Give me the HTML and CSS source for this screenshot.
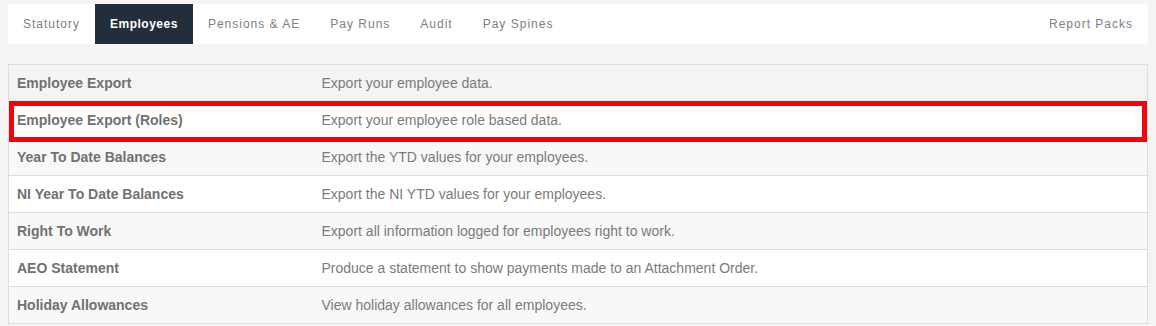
FILE: index.html
```html
<!DOCTYPE html>
<html lang="en">
<head>
<meta charset="utf-8">
<title>Reports - Employees</title>
<link rel="stylesheet" href="styles.css">
</head>
<body>
<nav class="tabs">
  <a class="tab" href="#">Statutory</a>
  <a class="tab active" href="#">Employees</a>
  <a class="tab" href="#">Pensions &amp; AE</a>
  <a class="tab" href="#">Pay Runs</a>
  <a class="tab" href="#">Audit</a>
  <a class="tab" href="#">Pay Spines</a>
  <a class="tab tab-right" href="#">Report Packs</a>
</nav>
<div class="report-wrap">
  <table class="report-table">
    <colgroup><col class="col-name"><col></colgroup>
    <tbody>
      <tr class="hover"><td class="name">Employee Export</td><td>Export your employee data.</td></tr>
      <tr class="even"><td class="name">Employee Export (Roles)</td><td>Export your employee role based data.</td></tr>
      <tr class="odd"><td class="name">Year To Date Balances</td><td>Export the YTD values for your employees.</td></tr>
      <tr class="even"><td class="name">NI Year To Date Balances</td><td>Export the NI YTD values for your employees.</td></tr>
      <tr class="odd"><td class="name">Right To Work</td><td>Export all information logged for employees right to work.</td></tr>
      <tr class="even"><td class="name">AEO Statement</td><td>Produce a statement to show payments made to an Attachment Order.</td></tr>
      <tr class="odd"><td class="name">Holiday Allowances</td><td>View holiday allowances for all employees.</td></tr>
    </tbody>
  </table>
  <div class="highlight"></div>
</div>
</body>
</html>
```

FILE: styles.css
```css
html, body {
  background: #f4f4f4;
}
body {
  margin: 4px 8px 0;
  font-family: "Liberation Sans", Arial, sans-serif;
  color: #777;
}
.tabs {
  display: flex;
  height: 40px;
  background: #fff;
  border-radius: 4px;
  overflow: hidden;
}
.tab {
  display: block;
  padding: 0 15px;
  line-height: 40px;
  font-size: 12px;
  letter-spacing: 1px;
  color: #7a7f86;
  text-decoration: none;
  white-space: nowrap;
}
.tab.active {
  background: #232e3b;
  color: #fff;
  font-weight: bold;
  letter-spacing: 0.5px;
}
.tab-right {
  margin-left: auto;
}
.report-wrap {
  position: relative;
  margin-top: 20px;
}
.report-table {
  width: 100%;
  border-collapse: collapse;
  table-layout: fixed;
  border: 1px solid #ddd;
  font-size: 14px;
  line-height: 20px;
}
.col-name {
  width: 305px;
}
.report-table td {
  padding: 8px;
  border-top: 1px solid #ddd;
  color: #7b7b7b;
  white-space: nowrap;
}
.report-table td.name {
  font-weight: bold;
  color: #717171;
}
.report-table tr.hover {
  background: #f4f4f4;
}
.report-table tr.odd {
  background: #f8f8f8;
}
.report-table tr.even {
  background: #fff;
}
.highlight {
  position: absolute;
  top: 37px;
  left: 1px;
  right: 1px;
  height: 41px;
  box-sizing: border-box;
  border: 5px solid #ea080c;
  pointer-events: none;
}
```
